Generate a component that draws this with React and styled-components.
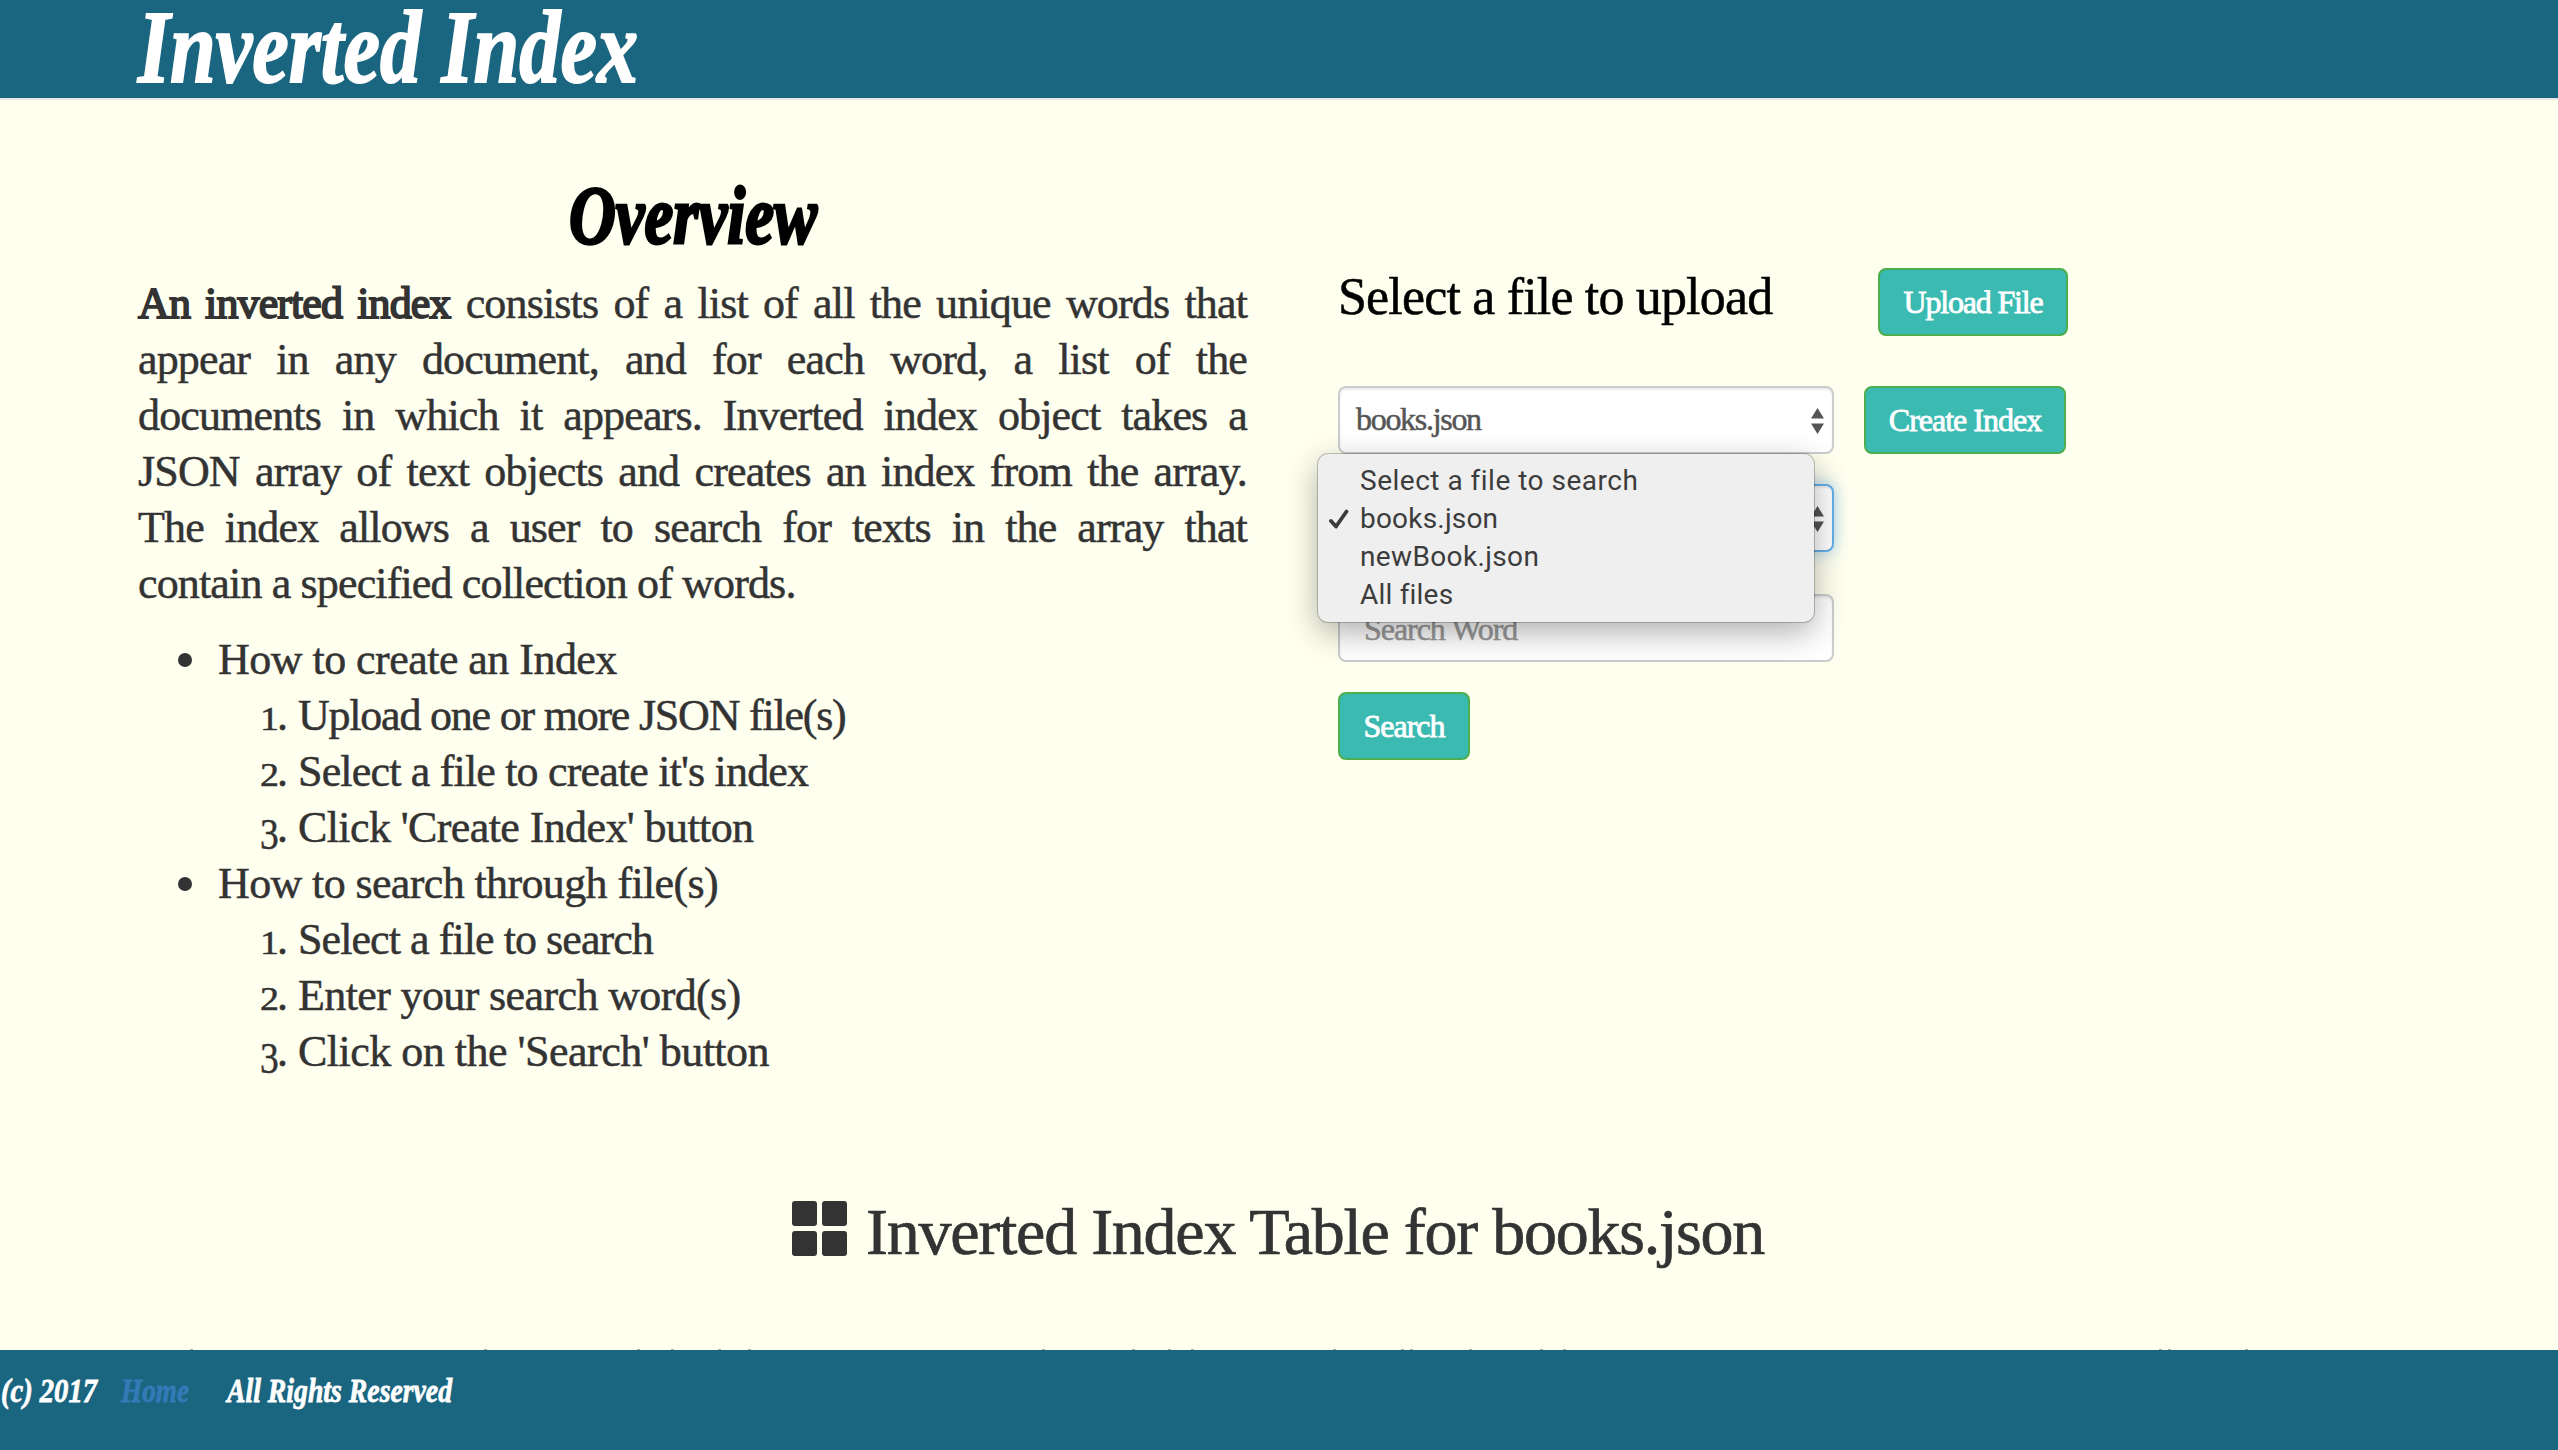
import React from "react";
import styled, { createGlobalStyle } from "styled-components";

const serif = '"Liberation Serif", "Times New Roman", serif';

const Global = createGlobalStyle`
  * { box-sizing: border-box; }
  html, body { margin: 0; background: #ffffef; overflow: hidden; }
  body { font-family: ${serif}; color: #333; }
`;

const Page = styled.div`
  height: 1450px;
  display: flex;
  flex-direction: column;
  overflow: hidden;
`;

const Script = styled.span`
  display: inline-block;
  font-weight: bold;
  font-style: italic;
  font-size: ${(p) => p.$size}px;
  line-height: ${(p) => p.$line}px;
  color: ${(p) => p.$color || "#fff"};
  width: ${(p) => p.$width}px;
  white-space: nowrap;
  transform: scaleX(${(p) => p.$squeeze});
  transform-origin: left;
  -webkit-text-stroke: ${(p) => p.$stroke || 0.8}px currentColor;
  text-decoration: none;
`;

const Header = styled.header`
  height: 100px;
  flex: none;
  padding: 0 138px;
  background: #1a657f;
  border-bottom: 2px solid #e7e7e7;
`;

const Columns = styled.main`
  display: flex;
  gap: 91px;
  padding: 0 138px;
  height: 1070px;
  flex: none;
`;

const Overview = styled.section`
  width: 1109px;
  padding-top: 68px;
`;

const OverviewTitle = styled.div`
  padding-left: 431px;
  height: 108px;
`;

const Body = styled.div`
  font-size: 44px;
  line-height: 56px;
  letter-spacing: -0.85px;
  -webkit-text-stroke: 0.5px currentColor;
`;

const Paragraph = styled.p`
  margin: 0 0 20px;
  text-align: justify;
`;

const Term = styled.b`
  font-weight: normal;
  letter-spacing: -0.9px;
  -webkit-text-stroke: 1.8px currentColor;
`;

const List = styled.ul`
  list-style: none;
  margin: 0;
  padding: 0;
`;

const Topic = styled.li`
  display: flex;
  align-items: center;
  height: 56px;
  padding-left: 40px;
  gap: 26px;
  letter-spacing: ${(p) => p.$tracking}px;
  &::before {
    content: "";
    width: 14px;
    height: 14px;
    border-radius: 50%;
    background: #333;
  }
`;

const Step = styled.li`
  display: flex;
  align-items: baseline;
  height: 56px;
  padding-left: 122px;
  letter-spacing: ${(p) => p.$tracking}px;
`;

const Marker = styled.span`
  display: flex;
  align-items: baseline;
  width: 38px;
  letter-spacing: 0;
`;

const Digit = styled.span`
  width: 17px;
  line-height: 1;
  font-size: ${(p) => (p.$low ? 44 : 33)}px;
  transform: ${(p) => (p.$low ? "translateY(7px) scaleX(0.85)" : "scaleX(1.15)")};
  transform-origin: left;
`;

const Controls = styled.section`
  width: 740px;
  padding-top: 168px;
  display: flex;
  flex-direction: column;
`;

const Row = styled.div`
  display: flex;
  align-items: flex-start;
  margin-bottom: ${(p) => p.$after}px;
`;

const UploadLabel = styled.div`
  width: 540px;
  padding-top: 1px;
  font-size: 52px;
  line-height: 56px;
  letter-spacing: -0.83px;
  color: #000;
  -webkit-text-stroke: 0.5px currentColor;
`;

const Button = styled.button`
  width: ${(p) => p.$width}px;
  height: 68px;
  margin-left: ${(p) => p.$left || 0}px;
  padding: 0;
  border: 2px solid #4cae4c;
  border-radius: 8px;
  background: #3bbab2;
  color: #fff;
  font: 32px/60px ${serif};
  letter-spacing: ${(p) => p.$tracking}px;
  -webkit-text-stroke: 0.8px currentColor;
`;

const Field = styled.div`
  display: flex;
  justify-content: space-between;
  width: 496px;
  height: 68px;
  padding: 0 9px 0 ${(p) => p.$indent || 16}px;
  border: 2px solid ${(p) => (p.$focused ? "#66afe9" : "#ccc")};
  border-radius: 8px;
  background: #fff;
  box-shadow: inset 0 2px 2px rgba(0, 0, 0, 0.075)
    ${(p) => (p.$focused ? ", 0 0 16px rgba(102, 175, 233, 0.6)" : "")};
  color: ${(p) => (p.$muted ? "#999" : "#555")};
  font-size: 32px;
  line-height: ${(p) => p.$line || 62}px;
  letter-spacing: ${(p) => p.$tracking || -1.3}px;
  -webkit-text-stroke: 0.5px currentColor;
`;

const Arrows = styled.svg`
  width: 13px;
  height: 26px;
  margin: 20px -1px 0 auto;
  fill: #555;
`;

const MenuAnchor = styled.div`
  position: relative;
`;

const Menu = styled.div`
  position: absolute;
  left: -20px;
  top: 68px;
  z-index: 2;
  width: 496px;
  height: 168px;
  padding-top: 8px;
  border-radius: 10px;
  background: #efefef;
  box-shadow: 0 0 0 1px rgba(0, 0, 0, 0.22), 0 10px 32px rgba(0, 0, 0, 0.32);
  font-family: Roboto, sans-serif;
  font-size: 28px;
  color: #3c3c3c;
`;

const Option = styled.div`
  display: flex;
  align-items: center;
  height: 38px;
  line-height: 38px;
  letter-spacing: ${(p) => p.$tracking}px;
`;

const Tick = styled.span`
  display: flex;
  width: 42px;
  padding-left: 11px;
`;

const TableTitle = styled.h2`
  flex: none;
  display: flex;
  align-items: flex-start;
  gap: 19px;
  height: 179px;
  margin: 0;
  padding-left: 792px;
  font-size: 66px;
  line-height: 76px;
  font-weight: normal;
  letter-spacing: -1.25px;
  -webkit-text-stroke: 0.7px currentColor;
`;

const Tiles = styled.svg`
  width: 55px;
  height: 55px;
  margin-top: 31px;
  fill: #333;
  stroke: none;
`;

const TitleText = styled.span`
  padding-top: 24px;
`;

const Specks = styled.svg`
  display: block;
  flex: none;
  width: 2558px;
  height: 1px;
  fill: #333;
  opacity: 0.4;
`;

const Footer = styled.footer`
  display: flex;
  height: 100px;
  flex: none;
  padding: 22px 0 0 1px;
  gap: 24px;
  background: #1a657f;
`;

const Select = ({ children, ...rest }) => (
  <Field {...rest}>
    {children && <span>{children}</span>}
    <Arrows viewBox="0 0 13 26">
      <path d="M6.500 0 13 10.500H0zM6.500 26 0 15.500H13z" />
    </Arrows>
  </Field>
);

const options = [
  { label: "Select a file to search", tracking: 0.5 },
  { label: "books.json", checked: true, tracking: 0.2 },
  { label: "newBook.json", tracking: 0.36 },
  { label: "All files", tracking: 0.2 },
];

const guide = [
  {
    topic: "How to create an Index",
    tracking: -0.53,
    steps: [
      ["Upload one or more JSON file(s)", -1.22],
      ["Select a file to create it's index", -0.82],
      ["Click 'Create Index' button", -0.6],
    ],
  },
  {
    topic: "How to search through file(s)",
    tracking: -0.62,
    steps: [
      ["Select a file to search", -0.93],
      ["Enter your search word(s)", -0.62],
      ["Click on the 'Search' button", -0.5],
    ],
  },
];

const specks = [
  191, 485, 638, 672, 719, 749, 1043, 1133, 1169, 1192, 1334, 1402, 1411, 1470, 1541, 1564, 2160, 2169, 2246,
];

export default function App() {
  return (
    <Page>
      <Global />
      <Header>
        <Script $size={103} $line={95} $squeeze={0.798} $width={510} $stroke={2}>Inverted Index</Script>
      </Header>
      <Columns>
        <Overview>
          <OverviewTitle>
            <Script $size={82} $line={96} $squeeze={0.79} $width={260} $color="#000" $stroke={3}>Overview</Script>
          </OverviewTitle>
          <Body>
            <Paragraph>
              <Term>An inverted index</Term> consists of a list of all the unique words that appear in any
              document, and for each word, a list of the documents in which it appears. Inverted index object
              takes a JSON array of text objects and creates an index from the array. The index allows a user
              to search for texts in the array that contain a specified collection of words.
            </Paragraph>
            <List>
              {guide.map((g) => (
                <React.Fragment key={g.topic}>
                  <Topic $tracking={g.tracking}>{g.topic}</Topic>
                  {g.steps.map(([text, tracking], i) => (
                    <Step key={text} $tracking={tracking}>
                      <Marker><Digit $low={i === 2}>{i + 1}</Digit>.</Marker>
                      <span>{text}</span>
                    </Step>
                  ))}
                </React.Fragment>
              ))}
            </List>
          </Body>
        </Overview>
        <Controls>
          <Row $after={50}>
            <UploadLabel>Select a file to upload</UploadLabel>
            <Button $width={190} $tracking={-1.2}>Upload File</Button>
          </Row>
          <Row $after={30}>
            <MenuAnchor>
              <Select>books.json</Select>
              <Menu>
                {options.map((o) => (
                  <Option key={o.label} $tracking={o.tracking}>
                    <Tick>
                      {o.checked && (
                        <svg width="20" height="20" viewBox="0 0 20 20" fill="none" stroke="#3c3c3c" strokeWidth="3.800" strokeLinecap="round" strokeLinejoin="round">
                          <path d="M2 12 7 17.500 17.500 2.500" />
                        </svg>
                      )}
                    </Tick>
                    {o.label}
                  </Option>
                ))}
              </Menu>
            </MenuAnchor>
            <Button $left={30} $width={202} $tracking={-1}>Create Index</Button>
          </Row>
          <Row $after={42}>
            <Select $focused />
          </Row>
          <Row $after={30}>
            <Field $muted $indent={24} $line={66} $tracking={-1.05}>Search Word</Field>
          </Row>
          <Row $after={0}>
            <Button $width={132} $tracking={-1}>Search</Button>
          </Row>
        </Controls>
      </Columns>
      <TableTitle>
        <Tiles viewBox="0 0 55 55">
          <rect width="25" height="25" rx="3" />
          <rect x="30" width="25" height="25" rx="3" />
          <rect y="30" width="25" height="25" rx="3" />
          <rect x="30" y="30" width="25" height="25" rx="3" />
        </Tiles>
        <TitleText>Inverted Index Table for books.json</TitleText>
      </TableTitle>
      <Specks viewBox="0 0 2558 1">
        {specks.map((x) => (
          <rect key={x} x={x - 1} width="3" height="1" />
        ))}
      </Specks>
      <Footer>
        <Script $size={34} $line={38} $squeeze={0.84} $width={96}>(c) 2017</Script>
        <Script as="a" $size={34} $line={38} $squeeze={0.8} $width={82} $color="#337ab7">Home</Script>
        <Script $size={34} $line={38} $squeeze={0.816} $width={230}>All Rights Reserved</Script>
      </Footer>
    </Page>
  );
}
